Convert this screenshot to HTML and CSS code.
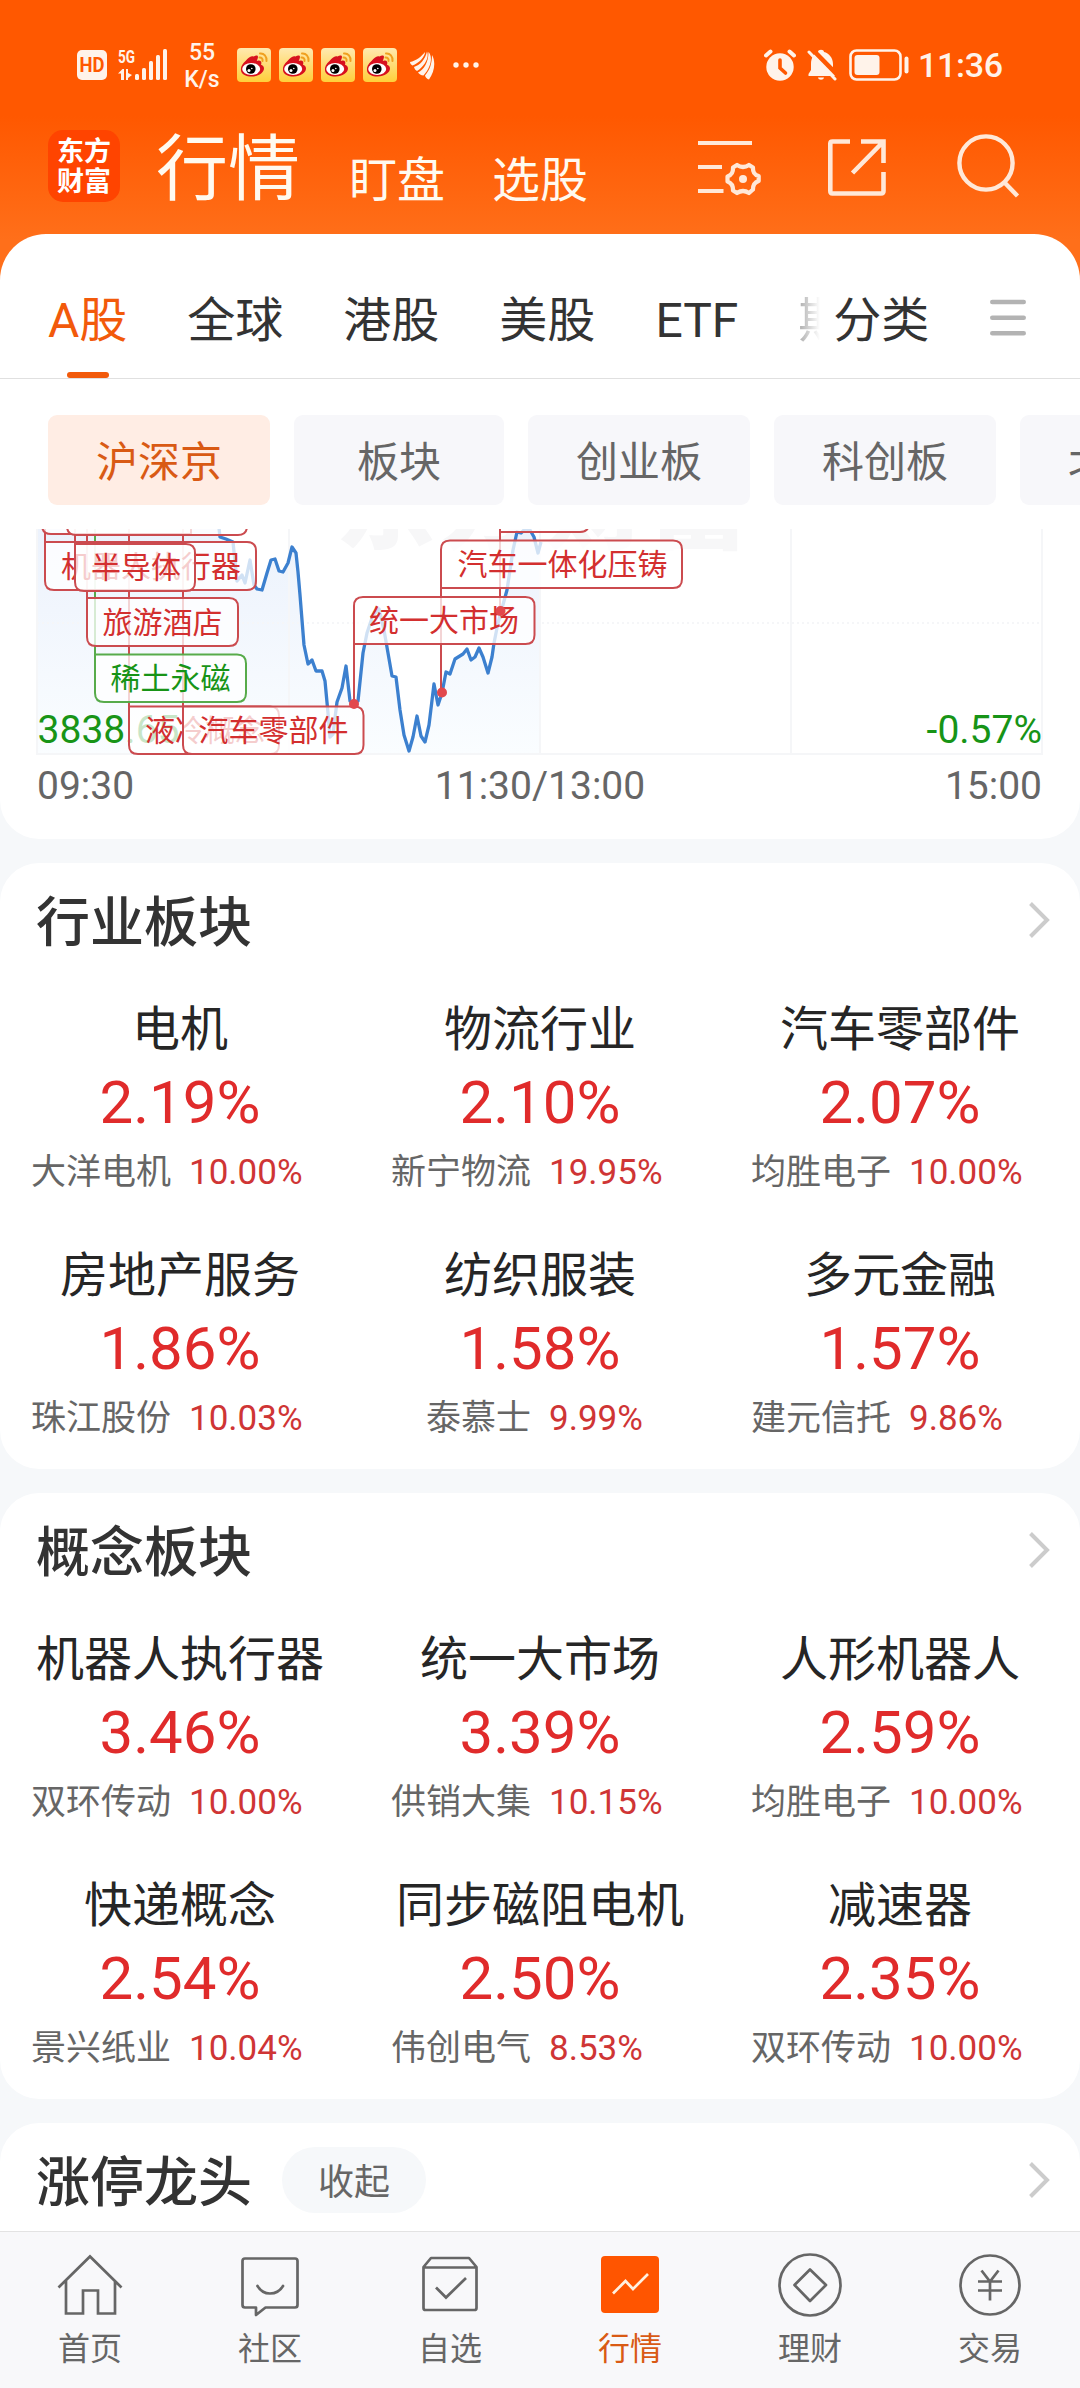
FILE: index.html
```html
<!DOCTYPE html>
<html lang="zh-CN">
<head>
<meta charset="utf-8">
<title>行情</title>
<link rel="stylesheet" href="styles.css">
</head>
<body>
<svg class="defs" width="0" height="0">
  <defs>
    <linearGradient id="weiboBg" x1="0" y1="0" x2="0" y2="1">
      <stop offset="0" stop-color="#ffe9b0"/><stop offset="1" stop-color="#ffcf3a"/>
    </linearGradient>
    <symbol id="weibo" viewBox="0 0 34 34">
      <rect width="34" height="34" rx="4" fill="url(#weiboBg)"/>
      <path d="M21 9c0-1.5-2-2-4.500-.4C14 7 11 10 9 12.500 5 16 3.500 19 4 22.500c.6 4 5.500 6 10.500 6 7 0 12.500-4 12.500-8 0-2.200-1.500-3.300-3-3.800 1-2.500 0-4.500-3-4-1.500.2-1.500-.2-.5-1.500z" fill="#d7101e"/>
      <ellipse cx="14.200" cy="21" rx="9" ry="6" fill="#fff"/>
      <circle cx="13.800" cy="21" r="4.800" fill="#000"/>
      <circle cx="12" cy="22.500" r="1.500" fill="#fff"/><circle cx="14.800" cy="20.500" r=".8" fill="#fff"/>
      <path d="M23 5.500c4-.5 7 3 6.500 7.500M22.500 9.500c2-.2 3.500 1.500 3 3.500" fill="none" stroke="#f0a020" stroke-width="2" stroke-linecap="round"/>
    </symbol>
    <symbol id="chevron" viewBox="0 0 21 36"><path d="M1.500 1.500 18 18 1.500 34.500" fill="none" stroke="#ccc" stroke-width="4"/></symbol>
  </defs>
</svg>
<div class="page">
  <div class="status">
    <div class="status-left">
      <svg width="30" height="30" viewBox="0 0 30 30"><rect width="30" height="30" rx="5" fill="#fff3ea"/><text x="15" y="21.500" class="hd-text" textLength="25" lengthAdjust="spacingAndGlyphs">HD</text></svg>
      <svg class="signal" width="50" height="32" viewBox="0 0 50 32" fill="#fff3ea">
        <text x="0" y="14" class="net-text" textLength="17" lengthAdjust="spacingAndGlyphs">5G</text>
        <path d="M0 24.500 4.500 20H6v11H3v-6.500zM8 20h2v4l4 2-4 3v2H8z"/>
        <rect x="17" y="25" width="4" height="6" rx="1.500"/><rect x="24" y="19" width="4" height="12" rx="1.500"/><rect x="31" y="12" width="4" height="19" rx="1.500"/><rect x="38" y="6" width="4" height="25" rx="1.500"/><rect x="45" y="0" width="4" height="31" rx="1.500"/>
      </svg>
      <div class="speed"><span>55</span><span>K/s</span></div>
      <div class="apps">
        <svg width="34" height="34"><use href="#weibo"/></svg>
        <svg width="34" height="34"><use href="#weibo"/></svg>
        <svg width="34" height="34"><use href="#weibo"/></svg>
        <svg width="34" height="34"><use href="#weibo"/></svg>
      </div>
      <svg class="wing" width="25" height="29" viewBox="0 0 25 29" fill="#fff3ea"><path d="M0 11C6 10 12 5 15 1c0 5-6 11-12.500 13.500C1 13.500 0 12.500 0 11zM4 16c6-2 11-7 13-15.500C19.500 6 15 15 7 20 5.500 19 4.500 18 4 16zM8 21.500c6-3 10.500-10 10.500-20.500C22.500 5 22 15 13.500 24.500 11 24.500 9 23 8 21.500zM22 4c4 7 2.500 17-3 24.500-2-.5-3.500-2-4-4C20 19 22 12 22 4z"/></svg>
      <svg class="dots" width="26" height="6" viewBox="0 0 26 6" fill="#fff3ea"><circle cx="3" cy="3" r="2.700"/><circle cx="13" cy="3" r="2.700"/><circle cx="23" cy="3" r="2.700"/></svg>
    </div>
    <div class="status-right">
      <svg width="32" height="32" viewBox="0 0 32 32"><circle cx="16" cy="18" r="13.700" fill="#fff3ea"/><path d="M2 6.500 6.500 2.500M30 6.500 25.500 2.500" stroke="#fff3ea" stroke-width="4" stroke-linecap="round"/><path d="M16 11v8l5.500 5" fill="none" stroke="#ff5800" stroke-width="3.600" stroke-linecap="round"/></svg>
      <svg class="bell" width="30" height="32" viewBox="0 0 30 32" fill="#fff3ea"><path d="M1.500 27 1.500 25 4 21v-6c0-6 3-11 7-12 0-3 6-3 6 0 5 1 9 6 9 12v6l2 6z"/><path d="M11 28.500h6c-.5 3-5.500 3-6 0z"/><path d="M3 -2 32 27.500" stroke="#ff5800" stroke-width="4.500"/><path d="M2 3 28 30" stroke="#fff3ea" stroke-width="3" stroke-linecap="round"/></svg>
      <svg class="battery" width="60" height="32" viewBox="0 0 60 32" fill="#fff3ea"><rect x="1.500" y="1.500" width="50" height="29" rx="6" fill="none" stroke="#fff3ea" stroke-width="2.600"/><rect x="5.500" y="6" width="25" height="20" rx="3"/><rect x="55.500" y="7.500" width="4" height="17" rx="2"/></svg>
      <span class="clock">11:36</span>
    </div>
  </div>

  <header class="header">
    <div class="logo"><span>东方</span><span>财富</span></div>
    <div class="title">行情</div>
    <div class="subtitle">盯盘</div>
    <div class="subtitle second">选股</div>
    <div class="actions">
      <svg width="63" height="63" viewBox="0 0 63 63" fill="none" stroke="#ffe8d8" stroke-width="4.200"><path d="M0 9h54M0 33h24M0 57h25.500"/><path stroke-linejoin="round" d="M39 31q6 4 12 0l4 2.500q-.5 7 5.700 8.500v5q-6 2-5.700 8.500L51 59q-6-4-12 0l-4-2.500q.3-7-5.500-9v-5q6-2 5.500-9z"/><circle cx="45" cy="45" r="4" fill="#ffe8d8" stroke="none"/></svg>
      <svg width="58" height="63" viewBox="0 0 58 63" fill="none" stroke="#ffe8d8" stroke-width="4.600"><path d="M22 7.500H4.500Q2.300 7.500 2.300 9.500V57Q2.300 59.500 4.500 59.500H53Q55.500 59.500 55.500 57V38M33 7.500H55.500V29M54.500 8.500 24.500 39"/></svg>
      <svg width="63" height="64" viewBox="0 0 63 64" fill="none" stroke="#ffe8d8" stroke-width="4.400"><circle cx="29" cy="29" r="26.600"/><path d="M47 48 60.500 62"/></svg>
    </div>
  </header>

  <main>
    <section class="panel">
      <nav class="tabs">
        <div class="tab active">A股</div>
        <div class="tab">全球</div>
        <div class="tab">港股</div>
        <div class="tab">美股</div>
        <div class="tab">ETF</div>
        <div class="tab fade">期</div>
        <div class="tab sort">分类</div>
        <svg class="menu" width="36" height="38" viewBox="0 0 36 38" stroke="#b3b3b3" stroke-width="4.600" stroke-linecap="round"><path d="M2.300 3h31.400M2.300 18.700h31.400M2.300 34.300h31.400"/></svg>
      </nav>
      <div class="chips">
        <div class="chip active">沪深京</div>
        <div class="chip">板块</div>
        <div class="chip">创业板</div>
        <div class="chip">科创板</div>
        <div class="chip">北交所</div>
      </div>
      <svg class="chart" width="1080" height="310" viewBox="0 529 1080 310">
        <defs>
          <linearGradient id="area" gradientUnits="userSpaceOnUse" x1="0" y1="529" x2="0" y2="754">
            <stop offset="0" stop-color="#ecf2fc"/><stop offset="1" stop-color="#fafdff"/>
          </linearGradient>
        </defs>
        <text class="watermark" x="336" y="541" textLength="412">东方财富</text>
        <path fill="url(#area)" d="M37 529H219L220 537 226 539 233 542 237 581 242 575 245 583 250 560 254 585 257 589 262 590 267 573 271 560 275 559 279 571 283 572 288 563 292 547 296 553 298 572 300 595 304 645 308 664 312 660 316 671 322 671 325 681 328 713 330 737 333 734 337 702 342 688 346 666 350 701 354 703 358 701 363 653 367 633 373 615 379 609 384 630 392 676 396 677 400 710 404 735 409 751 413 737 417 716 421 736 425 742 429 725 434 684 438 705 442 693 446 672 450 674 455 659 463 654 467 649 471 660 475 657 479 648 483 657 488 673 492 657 494 643 498 623 507 590 513 550 517 532 521 533 525 529H530L534 537 538 553 541 542V754H37Z"/>
        <path class="grid" d="M37 529V754H1042V529M289 529V754M540 529V754M791 529V754"/>
        <path class="grid dotted" d="M37 623H1042"/>
        <path class="price-line" d="M219 528 220 537 226 539 233 542 237 581 242 575 245 583 250 560 254 585 257 589 262 590 267 573 271 560 275 559 279 571 283 572 288 563 292 547 296 553 298 572 300 595 304 645 308 664 312 660 316 671 322 671 325 681 328 713 330 737 333 734 337 702 342 688 346 666 350 701 354 703 358 701 363 653 367 633 373 615 379 609 384 630 392 676 396 677 400 710 404 735 409 751 413 737 417 716 421 736 425 742 429 725 434 684 438 705 442 693 446 672 450 674 455 659 463 654 467 649 471 660 475 657 479 648 483 657 488 673 492 657 494 643 498 623 507 590 513 550 517 532 521 533 525 529 530 530 534 537 538 553 541 542"/>
        <text class="axis down" x="37.500" y="743" textLength="142">3838.65</text>
        <text class="axis down" x="1042" y="743" text-anchor="end">-0.57%</text>
        <g class="flags">
          <path d="M45 529V542M75 529V545M87 529V598M129 529V706M183 529V706M354 644V704M441 588V693M500 529V610"/>
          <path class="green" d="M95 529V654"/>
          <path d="M42 520V525Q42 534 51 534H191V520Z"/>
          <path d="M67 520V526Q67 535 76 535H238Q247 535 247 526V520Z"/>
          <path d="M500 520H589V523Q589 532 580 532H500Z"/>
          <path d="M45 542H247Q256 542 256 551V581Q256 590 247 590H54Q45 590 45 581Z"/><text x="61" y="577">机器人执行器</text>
          <path d="M75 544H186Q195 544 195 553V582Q195 591 186 591H84Q75 591 75 582Z"/><text x="91" y="578">半导体</text>
          <path d="M87 598H229Q238 598 238 607V637Q238 646 229 646H96Q87 646 87 637Z"/><text x="102.500" y="633">旅游酒店</text>
          <path class="green" d="M95 654.500H237Q246 654.500 246 663.500V693Q246 702 237 702H104Q95 702 95 693Z"/><text class="green" x="110.500" y="689">稀土永磁</text>
          <path d="M129 706.500H270Q279 706.500 279 715.500V745Q279 754 270 754H138Q129 754 129 745Z"/><text x="145" y="741">液冷概念</text>
          <path d="M183 706.500H354.500Q363.500 706.500 363.500 715.500V745Q363.500 754 354.500 754H192Q183 754 183 745Z"/><text x="198.500" y="741">汽车零部件</text>
          <path d="M450 540.500H673Q682 540.500 682 549.500V579Q682 588 673 588H441V549.500Q441 540.500 450 540.500Z"/><text x="457.500" y="575">汽车一体化压铸</text>
          <path d="M363 597H525.500Q534.500 597 534.500 606V635Q534.500 644 525.500 644H354V606Q354 597 363 597Z"/><text x="369" y="631">统一大市场</text>
        </g>
        <g fill="#e2484c"><circle cx="354" cy="704" r="5"/><circle cx="442" cy="692.500" r="5"/><circle cx="500.500" cy="611" r="5"/></g>
        <text class="axis" x="37" y="799">09:30</text>
        <text class="axis" x="540" y="799" text-anchor="middle">11:30/13:00</text>
        <text class="axis" x="1042" y="799" text-anchor="end">15:00</text>
      </svg>
    </section>

    <section class="card">
      <div class="card-head"><h2>行业板块</h2><svg class="more" width="21" height="36"><use href="#chevron"/></svg></div>
      <div class="board">
        <div class="cell"><div class="name">电机</div><div class="pct">2.19%</div><div class="lead"><span>大洋电机</span><b>10.00%</b></div></div>
        <div class="cell"><div class="name">物流行业</div><div class="pct">2.10%</div><div class="lead"><span>新宁物流</span><b>19.95%</b></div></div>
        <div class="cell"><div class="name">汽车零部件</div><div class="pct">2.07%</div><div class="lead"><span>均胜电子</span><b>10.00%</b></div></div>
        <div class="cell"><div class="name">房地产服务</div><div class="pct">1.86%</div><div class="lead"><span>珠江股份</span><b>10.03%</b></div></div>
        <div class="cell"><div class="name">纺织服装</div><div class="pct">1.58%</div><div class="lead"><span>泰慕士</span><b>9.99%</b></div></div>
        <div class="cell"><div class="name">多元金融</div><div class="pct">1.57%</div><div class="lead"><span>建元信托</span><b>9.86%</b></div></div>
      </div>
    </section>

    <section class="card">
      <div class="card-head"><h2>概念板块</h2><svg class="more" width="21" height="36"><use href="#chevron"/></svg></div>
      <div class="board">
        <div class="cell"><div class="name">机器人执行器</div><div class="pct">3.46%</div><div class="lead"><span>双环传动</span><b>10.00%</b></div></div>
        <div class="cell"><div class="name">统一大市场</div><div class="pct">3.39%</div><div class="lead"><span>供销大集</span><b>10.15%</b></div></div>
        <div class="cell"><div class="name">人形机器人</div><div class="pct">2.59%</div><div class="lead"><span>均胜电子</span><b>10.00%</b></div></div>
        <div class="cell"><div class="name">快递概念</div><div class="pct">2.54%</div><div class="lead"><span>景兴纸业</span><b>10.04%</b></div></div>
        <div class="cell"><div class="name">同步磁阻电机</div><div class="pct">2.50%</div><div class="lead"><span>伟创电气</span><b>8.53%</b></div></div>
        <div class="cell"><div class="name">减速器</div><div class="pct">2.35%</div><div class="lead"><span>双环传动</span><b>10.00%</b></div></div>
      </div>
    </section>

    <section class="card last">
      <div class="card-head"><h2>涨停龙头</h2><button class="pill">收起</button><svg class="more" width="21" height="36"><use href="#chevron"/></svg></div>
    </section>
  </main>

  <nav class="bottom">
    <a class="item"><svg width="66" height="66" viewBox="0 0 66 66"><path d="M1.500 35.500 33 4.500 64.500 35.500M9 29V61.500H26V38.500H41V61.500H58V29"/></svg>首页</a>
    <a class="item"><svg width="66" height="66" viewBox="0 0 66 66"><path stroke-linejoin="round" d="M8 6.500H58Q60.500 6.500 60.500 9V53Q60.500 55.500 58 55.500H28.500L19 63V55.500H8Q5.500 55.500 5.500 53V9Q5.500 6.500 8 6.500Z"/><path d="M20.500 34Q25 41.500 33 41.500 41.500 41.500 46 34" stroke-linecap="round"/></svg>社区</a>
    <a class="item"><svg width="66" height="66" viewBox="0 0 66 66"><path stroke-linejoin="round" d="M6.500 15 14 6H52L59.500 15V56Q59.500 58 57.500 58H8.500Q6.500 58 6.500 56ZM6.500 15.500H59.500"/><path d="M19 35.500 29 45.500 49 26"/></svg>自选</a>
    <a class="item active"><svg width="66" height="66" viewBox="0 0 66 66"><rect x="4" y="4" width="58" height="57" rx="4" fill="#ff5500" stroke="none"/><path d="M16 41.500 28.500 29 36 37 51 22" stroke="#fff0e0"/></svg>行情</a>
    <a class="item"><svg width="66" height="66" viewBox="0 0 66 66"><circle cx="33" cy="33" r="30.500"/><path stroke-linejoin="round" d="M33 17.500 49 33 33 49 17.500 33Z"/></svg>理财</a>
    <a class="item"><svg width="66" height="66" viewBox="0 0 66 66"><circle cx="33" cy="33" r="29.500"/><path d="M24.500 18.500 33 29.500 41.500 18.500M33 29V48.500M21 29.500H45M21 38.500H45"/></svg>交易</a>
  </nav>
</div>
</body>
</html>
```
FILE: styles.css
```css
* { box-sizing: border-box; }
body {
  margin: 0;
  background: #f6f8fa;
  font-family: Roboto, "Noto Sans CJK SC", sans-serif;
  color: #333;
}
svg { display: block; flex: none; }
.defs { position: absolute; }
.page {
  width: 1080px;
  height: 2388px;
  overflow: hidden;
  display: flex;
  flex-direction: column;
  background: linear-gradient(#ff5800 0, #ff5800 116px, #ff6f1a 240px, #ff6f1a 300px, #f6f8fa 300px);
}

/* status bar */
.status {
  height: 130px;
  padding: 0 75px 0 77px;
  display: flex;
  justify-content: space-between;
  color: #fff3ea;
}
.status-left, .status-right { display: flex; align-items: center; height: 130px; }
.hd-text { font: 700 20px Roboto, sans-serif; fill: #ff5800; text-anchor: middle; }
.net-text { font: 700 19px Roboto, sans-serif; }
.signal { margin-left: 11px; margin-top: -1px; }
.speed {
  width: 40px;
  margin-left: 14px;
  margin-top: 2px;
  display: flex;
  flex-direction: column;
  align-items: center;
  font-size: 23px;
  font-weight: 500;
  line-height: 27px;
}
.apps { display: flex; gap: 8px; margin-left: 15px; }
.wing { margin-left: 13px; }
.dots { margin-left: 18px; }
.bell { margin-left: 11px; }
.battery { margin-left: 12px; margin-right: 9px; }
.clock { font-size: 34px; font-weight: 500; width: 87px; white-space: nowrap; letter-spacing: -.3px; }

/* title row */
.header {
  height: 104px;
  padding-left: 48px;
  display: flex;
  color: #fffaf0;
  line-height: 72px;
}
.logo {
  width: 72px;
  height: 72px;
  border-radius: 15px;
  background: #ff4400;
  display: flex;
  flex-direction: column;
  align-items: center;
  padding-top: 7px;
  font-size: 27px;
  font-weight: 700;
  line-height: 30px;
  color: #fff;
}
.title { font-size: 72px; margin-left: 36px; padding-top: 4px; }
.subtitle { font-size: 48px; margin-left: 49px; padding-top: 15px; }
.subtitle.second { margin-left: 47px; }
.actions { margin-left: 110px; display: flex; gap: 67px; padding-top: 4px; }
.actions svg:last-child { margin-left: 4px; }

/* main panel */
.panel {
  height: 605px;
  background: #fff;
  border-radius: 46px 46px 39px 39px;
  overflow: hidden;
}
.tabs {
  height: 145px;
  padding: 57px 54px 0 48px;
  border-bottom: 1px solid #e0e0e0;
  display: flex;
  font-size: 48px;
  line-height: 60px;
}
.tab {
  margin-right: 60px;
  display: flex;
  flex-direction: column;
  align-items: center;
  justify-content: space-between;
  white-space: nowrap;
}
.tab.active { color: #f25a0b; }
.tab.active::after {
  content: "";
  width: 42px;
  height: 6px;
  border-radius: 3px;
  background: #f25a0b;
}
.tab.fade {
  width: 22px;
  margin-right: 13px;
  overflow: hidden;
  align-items: flex-start;
  color: transparent;
  background: linear-gradient(90deg, #aaa, #fff);
  background-clip: text;
  -webkit-background-clip: text;
}
.tab.sort { margin-right: 0; }
.menu { margin: 8px 0 0 auto; }

.chips {
  padding: 36px 0 24px 48px;
  display: flex;
  gap: 24px;
  overflow: hidden;
}
.chip {
  flex: none;
  min-width: 210px;
  height: 90px;
  padding: 3px 48px 0;
  border-radius: 9px;
  background: #f7f7fa;
  color: #666;
  font-size: 42px;
  line-height: 90px;
  text-align: center;
}
.chip.active { background: #ffede4; color: #d95a14; }

/* intraday chart */
.watermark { font: 900 99px "Noto Sans CJK SC", sans-serif; fill: #f7f7f8; }
.grid { fill: none; stroke: #f5f6f8; stroke-width: 2; }
.dotted { stroke-dasharray: 2 3; }
.price-line { fill: none; stroke: #3c80cf; stroke-width: 3.3; stroke-linejoin: round; }
.axis { font-size: 39px; fill: #666; }
.axis.down { fill: #179417; }
.flags path { fill: rgba(255, 255, 255, .76); stroke: #cb4b4f; stroke-width: 2; }
.flags path.green { stroke: #57ab4b; }
.flags text { font-size: 30px; fill: #d32f2f; }
.flags text.green { fill: #179417; }

/* board cards */
.card {
  height: 606px;
  margin-top: 24px;
  background: #fff;
  border-radius: 39px;
}
.card.last { height: 108px; border-radius: 39px 39px 0 0; }
.card-head {
  display: flex;
  align-items: center;
  height: 114px;
  padding: 0 30px 0 36px;
}
.card-head h2 { margin: 0; font-size: 54px; font-weight: 500; line-height: 72px; padding-top: 8px; }
.more { margin-left: auto; }
.pill {
  margin: 0 0 0 30px;
  width: 144px;
  height: 66px;
  border: 0;
  border-radius: 33px;
  background: #f6f8fa;
  color: #666;
  font: 36px/66px Roboto, "Noto Sans CJK SC", sans-serif;
  padding: 3px 0 0;
}
.board { display: grid; grid-template-columns: repeat(3, 360px); grid-auto-rows: 246px; }
.cell { padding-top: 17px; text-align: center; }
.name { font-size: 48px; line-height: 72px; color: #262626; white-space: nowrap; }
.pct { font-size: 60px; line-height: 74px; color: #e02b2b; }
.lead { display: grid; grid-template-columns: 1fr 1fr; gap: 18px; font-size: 35px; line-height: 66px; }
.lead span { text-align: right; color: #666; }
.lead b { text-align: left; font-weight: 400; color: #cf3535; }

/* bottom navigation */
.bottom {
  height: 157px;
  border-top: 1px solid #e3e3e3;
  background: #f8f8fa;
  display: grid;
  grid-template-columns: repeat(6, 1fr);
}
.item {
  display: flex;
  flex-direction: column;
  align-items: center;
  padding-top: 20px;
  color: #666;
  font-size: 32px;
  line-height: 63px;
}
.item svg { fill: none; stroke: #666; stroke-width: 2.7; }
.item.active { color: #d95a14; }
```
